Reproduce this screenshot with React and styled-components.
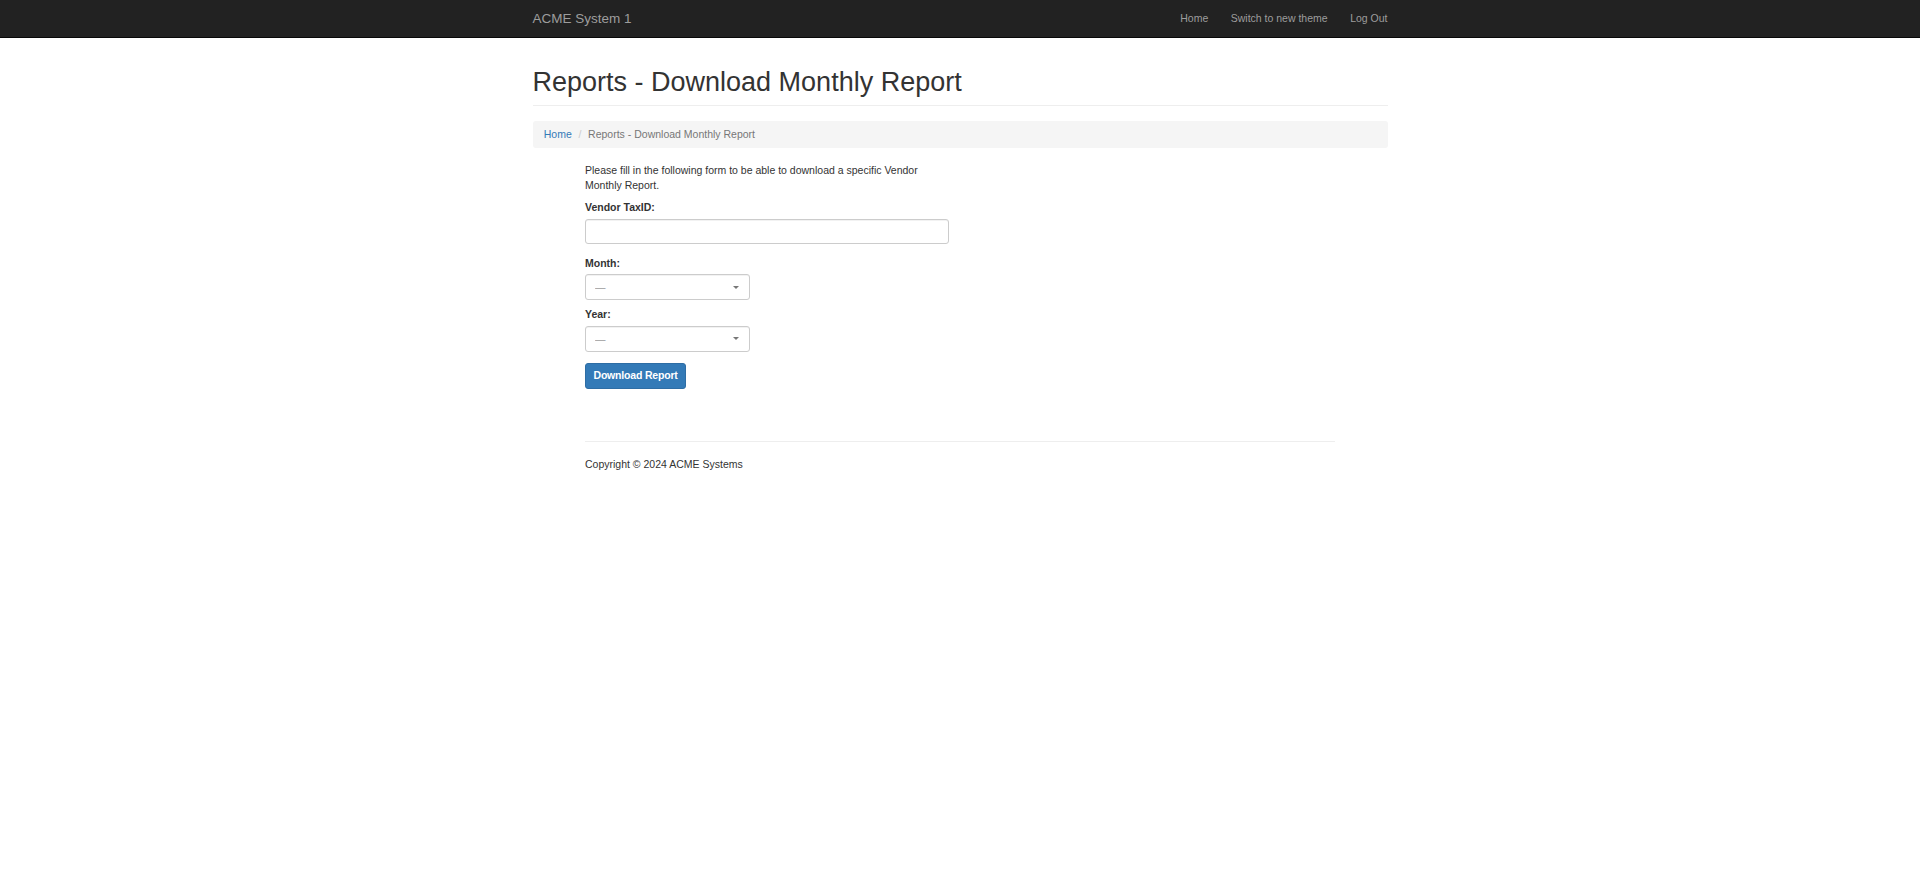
import React, { useState } from 'react'
import styled, { createGlobalStyle } from 'styled-components'

const GlobalStyle = createGlobalStyle`
    html, body {
        margin: 0;
        padding: 0;
        background: #fff;
    }
    * {
        box-sizing: border-box;
    }
`

// whole page is rendered at 75% like the screenshot
const Page = styled.div`
    zoom: 0.75;
    font-family: "Liberation Sans", Arial, sans-serif;
    font-size: 14px;
    line-height: 20px;
    color: #333;
    min-height: 100vh;
`

const Navbar = styled.nav`
    background-color: #222;
    border-bottom: 1px solid #080808;
    height: 51px;
`

const Container = styled.div`
    width: 1170px;
    margin: 0 auto;
    padding: 0 15px;
    display: flex;
    align-items: center;
    justify-content: space-between;
`

const Brand = styled.a`
    font-size: 18px;
    line-height: 20px;
    padding: 15px 0;
    color: #9d9d9d;
    text-decoration: none;
`

const NavList = styled.ul`
    display: flex;
    list-style: none;
    margin: 0 -15px 0 0;
    padding: 0;
`

const NavLink = styled.a`
    display: block;
    padding: 15px;
    color: #9d9d9d;
    text-decoration: none;
    font-size: 14px;
    line-height: 20px;
`

const Content = styled.div`
    width: 1170px;
    margin: 0 auto;
    padding: 40px 15px 0;
`

const PageHeader = styled.div`
    padding-bottom: 9px;
    border-bottom: 1px solid #eee;
    margin-bottom: 20px;
`

const Title = styled.h1`
    margin: 0;
    font-size: 36px;
    font-weight: 500;
    line-height: 1.1;
    color: #333;
`

const Breadcrumb = styled.ol`
    display: flex;
    list-style: none;
    margin: 0 0 20px;
    padding: 8px 15px;
    background-color: #f5f5f5;
    border-radius: 4px;
`

const Crumb = styled.li`
    color: ${p => p.active ? '#777' : '#337ab7'};

    &:not(:first-child)::before {
        content: "/\\00a0";
        padding: 0 5px;
        margin-left: 4px;
        color: #ccc;
    }
`

const CrumbLink = styled.a`
    color: #337ab7;
    text-decoration: none;
`

const Main = styled.div`
    width: 1000px;
    margin: 0 auto;
`

const Form = styled.form`
    width: 485px;
`

const Intro = styled.p`
    margin: 0 0 10px;
`

const FormGroup = styled.div`
    margin-bottom: ${p => p.tight ? '10px' : '15px'};
`

const Label = styled.label`
    display: inline-block;
    margin-bottom: 5px;
    font-weight: 700;
`

const Input = styled.input`
    display: block;
    width: 100%;
    height: 34px;
    padding: 6px 12px;
    font-family: inherit;
    font-size: 14px;
    color: #555;
    background: #fff;
    border: 1px solid #ccc;
    border-radius: 4px;
    box-shadow: inset 0 1px 1px rgba(0, 0, 0, .075);
    outline: none;
`

const SelectWrap = styled.div`
    position: relative;
    width: 220px;

    &::after {
        content: "";
        position: absolute;
        right: 15px;
        top: 15px;
        border-left: 4px solid transparent;
        border-right: 4px solid transparent;
        border-top: 4px solid #777;
        pointer-events: none;
    }
`

const Select = styled.select`
    appearance: none;
    display: block;
    width: 100%;
    height: 34px;
    padding: 6px 12px;
    font-family: inherit;
    font-size: 14px;
    color: #999;
    background: #fff;
    border: 1px solid #ccc;
    border-radius: 4px;
    box-shadow: inset 0 1px 1px rgba(0, 0, 0, .075);
    outline: none;
`

const Button = styled.button`
    display: inline-block;
    padding: 6px 10px;
    font-family: inherit;
    font-size: 14px;
    font-weight: 700;
    letter-spacing: -0.25px;
    line-height: 20px;
    color: #fff;
    background-color: #337ab7;
    border: 1px solid #2e6da4;
    border-radius: 4px;
    cursor: pointer;
`

const Footer = styled.footer`
    margin-top: 70px;
`

const Rule = styled.hr`
    margin: 0 0 20px;
    border: 0;
    border-top: 1px solid #eee;
`

const Copyright = styled.p`
    margin: 0;
`

const months = ['January', 'February', 'March', 'April', 'May', 'June', 'July',
    'August', 'September', 'October', 'November', 'December']
const years = [2024, 2023, 2022, 2021, 2020]

function App() {
    const [taxId, setTaxId] = useState('')
    const [month, setMonth] = useState('')
    const [year, setYear] = useState('')

    return (
        <>
        <GlobalStyle />
        <Page>
            <Navbar>
                <Container>
                    <Brand href="#">ACME System 1</Brand>
                    <NavList>
                        <li><NavLink href="#">Home</NavLink></li>
                        <li><NavLink href="#">Switch to new theme</NavLink></li>
                        <li><NavLink href="#">Log Out</NavLink></li>
                    </NavList>
                </Container>
            </Navbar>
            <Content>
                <PageHeader>
                    <Title>Reports - Download Monthly Report</Title>
                </PageHeader>
                <Breadcrumb>
                    <Crumb><CrumbLink href="#">Home</CrumbLink></Crumb>
                    <Crumb active>Reports - Download Monthly Report</Crumb>
                </Breadcrumb>
                <Main>
                    <Form onSubmit={e => e.preventDefault()}>
                        <Intro>Please fill in the following form to be able to download a specific Vendor Monthly Report.</Intro>
                        <FormGroup>
                            <Label htmlFor="taxid">Vendor TaxID:</Label>
                            <Input id="taxid" type="text" value={taxId} onChange={e => setTaxId(e.target.value)} />
                        </FormGroup>
                        <FormGroup tight>
                            <Label htmlFor="month">Month:</Label>
                            <SelectWrap>
                                <Select id="month" value={month} onChange={e => setMonth(e.target.value)}>
                                    <option value="">—</option>
                                    {months.map((m, i) => <option key={m} value={i + 1}>{m}</option>)}
                                </Select>
                            </SelectWrap>
                        </FormGroup>
                        <FormGroup>
                            <Label htmlFor="year">Year:</Label>
                            <SelectWrap>
                                <Select id="year" value={year} onChange={e => setYear(e.target.value)}>
                                    <option value="">—</option>
                                    {years.map(y => <option key={y} value={y}>{y}</option>)}
                                </Select>
                            </SelectWrap>
                        </FormGroup>
                        <Button type="submit">Download Report</Button>
                    </Form>
                    <Footer>
                        <Rule />
                        <Copyright>Copyright © 2024 ACME Systems</Copyright>
                    </Footer>
                </Main>
            </Content>
        </Page>
        </>
    )
}

export default App
